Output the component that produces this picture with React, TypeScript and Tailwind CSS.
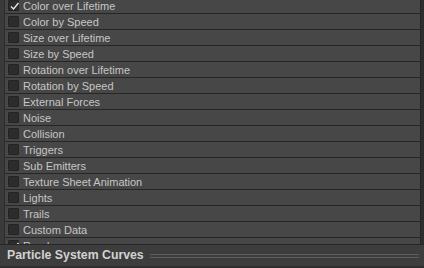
import React from "react";

const items: { label: string; checked: boolean }[] = [
  { label: "Color over Lifetime", checked: true },
  { label: "Color by Speed", checked: false },
  { label: "Size over Lifetime", checked: false },
  { label: "Size by Speed", checked: false },
  { label: "Rotation over Lifetime", checked: false },
  { label: "Rotation by Speed", checked: false },
  { label: "External Forces", checked: false },
  { label: "Noise", checked: false },
  { label: "Collision", checked: false },
  { label: "Triggers", checked: false },
  { label: "Sub Emitters", checked: false },
  { label: "Texture Sheet Animation", checked: false },
  { label: "Lights", checked: false },
  { label: "Trails", checked: false },
  { label: "Custom Data", checked: false },
  { label: "Renderer", checked: true },
];

function Check() {
  return (
    <svg width="11" height="11" viewBox="0 0 11 11" className="absolute left-0 top-0">
      <path d="M2 5.5 L4.5 8 L9.5 2" fill="none" stroke="#e6e6e6" strokeWidth="1.4" />
    </svg>
  );
}

export default function App() {
  return (
    <div
      className="w-[424px] h-[268px] overflow-hidden bg-[#383838] flex flex-col"
      style={{ fontFamily: "'Liberation Sans', Arial, sans-serif" }}
    >
      <div className="h-[244px] overflow-hidden flex">
        <div className="w-[5px] shrink-0 bg-[#3a3a3a] border-r border-[#2c2c2c]" />
        <div className="flex-1 flex flex-col mt-[-3px]">
          {items.map((it) => (
            <div
              key={it.label}
              className="h-[16px] shrink-0 border-t border-[#262626] bg-[#474747] flex items-center"
            >
              <div className="ml-[3px] relative w-[11px] h-[11px] bg-[#2c2c2c] border border-[#232323] rounded-[1px]">
                {it.checked && <Check />}
              </div>
              <span className="ml-[4px] pt-px text-[11px] leading-none text-[#c6c6c6] whitespace-nowrap">
                {it.label}
              </span>
            </div>
          ))}
        </div>
        <div className="w-[4px] shrink-0 bg-[#2e2e2e] border-l border-[#262626]" />
      </div>
      <div className="h-[24px] shrink-0 bg-[#3d3d3d] border-t border-[#262626] flex items-center border-b-[2px] border-b-[#2f2f2f]">
        <span className="ml-[7px] text-[12.3px] font-bold leading-none text-[#d2d2d2] whitespace-nowrap">
          Particle System Curves
        </span>
        <div className="ml-[6px] mr-[5px] flex-1 flex flex-col gap-[2px]">
          <div className="h-px bg-[#5e5e5e]" />
          <div className="h-px bg-[#5e5e5e]" />
        </div>
      </div>
    </div>
  );
}
